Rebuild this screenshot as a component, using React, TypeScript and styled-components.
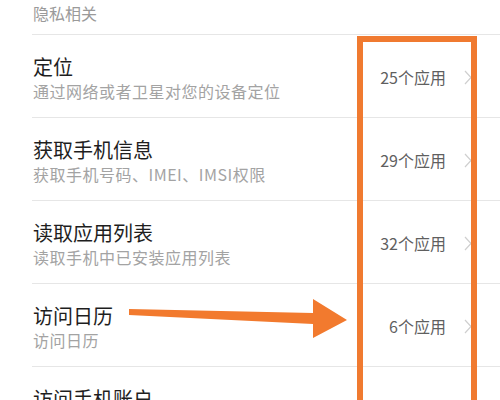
import React from "react";
import styled, { createGlobalStyle } from "styled-components";

const GlobalStyle = createGlobalStyle`
  html, body {
    margin: 0;
    padding: 0;
    background: #ffffff;
    overflow: hidden;
  }
  body {
    font-family: "Noto Sans CJK SC", "Noto Sans", sans-serif;
  }
`;

const Screen = styled.div`
  position: relative;
  width: 500px;
  height: 400px;
  overflow: hidden;
  background: #ffffff;
`;

const List = styled.div`
  margin-left: 32px;
`;

const Header = styled.div`
  padding: 3px 0 11px 1px;
  font-size: 16px;
  line-height: 20px;
  color: #9a9a9a;
  border-bottom: 1px solid #e6e6e6;
`;

const Row = styled.div`
  display: flex;
  align-items: center;
  height: 82px;
  border-bottom: 1px solid #e6e6e6;
  padding-right: 28px;
`;

const Texts = styled.div`
  flex: 1;
  align-self: flex-start;
  display: flex;
  flex-direction: column;
  padding-top: 19px;
  padding-left: 1px;
`;

const Title = styled.div`
  font-size: 20px;
  line-height: 26px;
  color: #1e1e1e;
`;

const Sub = styled.div`
  font-size: 16px;
  line-height: 22px;
  color: #a3a3a3;
  letter-spacing: 0.5px;
`;

const Value = styled.div`
  font-size: 16px;
  color: #5f5f5f;
  margin-right: 18px;
  margin-top: 2px;
`;

const Chevron = styled.svg`
  width: 8px;
  height: 15px;
  margin-top: 2px;
`;

const Frame = styled.div`
  position: absolute;
  left: 357px;
  top: 36px;
  width: 108px;
  height: 400px;
  border: 6px solid #f07a30;
`;

const Arrow = styled.svg`
  position: absolute;
  left: 0;
  top: 0;
  pointer-events: none;
`;

const items = [
  { title: "定位", sub: "通过网络或者卫星对您的设备定位", count: 25 },
  { title: "获取手机信息", sub: "获取手机号码、IMEI、IMSI权限", count: 29 },
  { title: "读取应用列表", sub: "读取手机中已安装应用列表", count: 32 },
  { title: "访问日历", sub: "访问日历", count: 6 },
  { title: "访问手机账户", sub: "访问手机账户", count: 8 },
];

export default function App() {
  return (
    <Screen>
      <GlobalStyle />
      <List>
        <Header>隐私相关</Header>
        {items.map((it) => (
          <Row key={it.title}>
            <Texts>
              <Title>{it.title}</Title>
              <Sub>{it.sub}</Sub>
            </Texts>
            <Value>{it.count}个应用</Value>
            <Chevron viewBox="0 0 8 15">
              <polyline points="1,1 7,7.5 1,14" fill="none" stroke="#cfcfcf" strokeWidth="1.2" />
            </Chevron>
          </Row>
        ))}
      </List>
      <Frame />
      <Arrow width="500" height="400" viewBox="0 0 500 400">
        <polygon
          points="129,309 313,313 313,299 347,320 313,338 313,324 129,315"
          fill="#f27a2e"
        />
      </Arrow>
    </Screen>
  );
}
